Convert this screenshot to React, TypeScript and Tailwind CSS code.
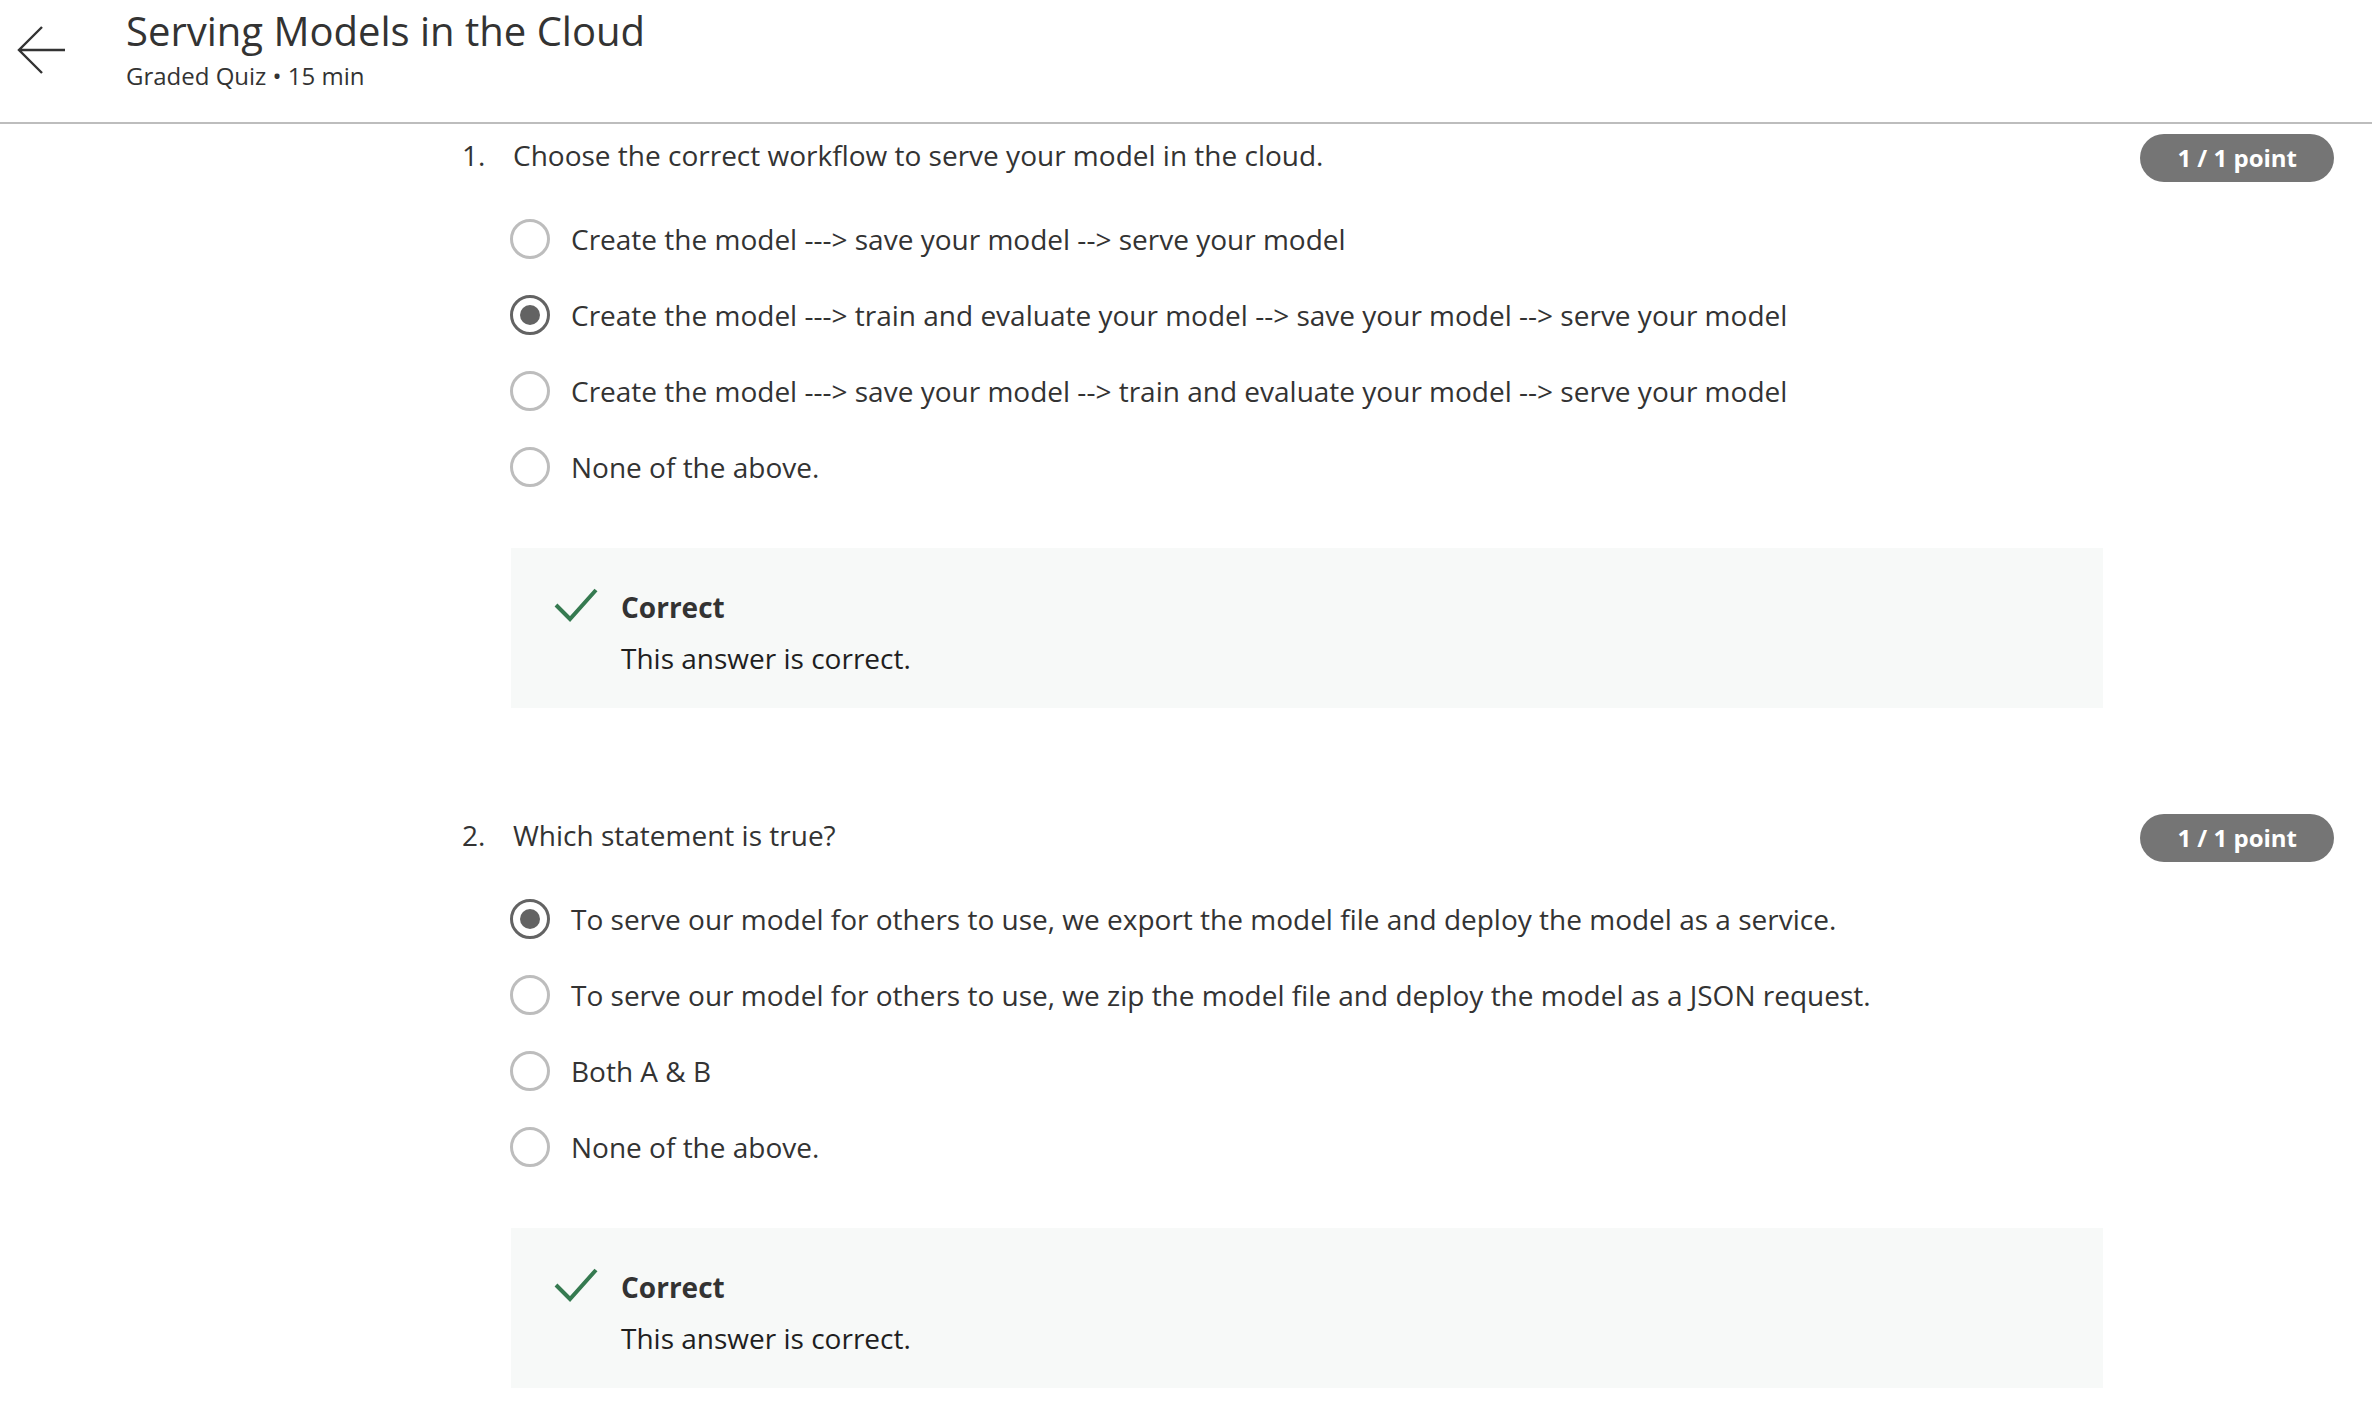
import React from "react";

type Q = {
  num: string;
  text: string;
  options: string[];
  selected: number;
};

const questions: Q[] = [
  {
    num: "1.",
    text: "Choose the correct workflow to serve your model in the cloud.",
    options: [
      "Create the model ---> save your model --> serve your model",
      "Create the model ---> train and evaluate your model --> save your model --> serve your model",
      "Create the model ---> save your model --> train and evaluate your model --> serve your model",
      "None of the above.",
    ],
    selected: 1,
  },
  {
    num: "2.",
    text: "Which statement is true?",
    options: [
      "To serve our model for others to use, we export the model file and deploy the model as a service.",
      "To serve our model for others to use, we zip the model file and deploy the model as a JSON request.",
      "Both A & B",
      "None of the above.",
    ],
    selected: 0,
  },
];

function Radio({ checked }: { checked: boolean }) {
  return checked ? (
    <div className="w-[40px] h-[40px] shrink-0 rounded-full border-[3px] border-[#636363] flex items-center justify-center">
      <div className="w-[20px] h-[20px] rounded-full bg-[#636363]" />
    </div>
  ) : (
    <div className="w-[40px] h-[40px] shrink-0 rounded-full border-[3px] border-[#bdbdbd]" />
  );
}

function Question({ q, first }: { q: Q; first: boolean }) {
  return (
    <section className={first ? "" : "mt-[106px]"}>
      <div className="flex items-start h-[47px]">
        <div className="w-[51px] shrink-0 text-[28px] leading-[42px] text-[#333333]">{q.num}</div>
        <div className="flex-1 text-[28px] leading-[42px] text-[#333333]">{q.text}</div>
        <div className="h-[48px] px-[37px] rounded-full bg-[#757575] text-white font-bold text-[24px] flex items-center whitespace-nowrap">
          1 / 1 point
        </div>
      </div>
      <div className="ml-[50px] mt-[20px] flex flex-col">
        {q.options.map((o, i) => (
          <div key={i} className="h-[76px] flex items-center gap-[21px]">
            <div className="-ml-[2px]">
              <Radio checked={i === q.selected} />
            </div>
            <div className="text-[28px] leading-[42px] text-[#333333]">{o}</div>
          </div>
        ))}
      </div>
      <div className="ml-[49px] mt-[43px] w-[1592px] bg-[#f7f9f8] pl-[43px] pt-[38px] pb-[29px] flex">
        <svg width="44" height="34" viewBox="0 0 44 34" className="mt-[2px] shrink-0">
          <polyline
            points="2,17 16,31 42,2"
            fill="none"
            stroke="#357a50"
            strokeWidth="4"
            strokeLinecap="butt"
            strokeLinejoin="miter"
          />
        </svg>
        <div className="ml-[23px]">
          <div className="text-[28px] leading-[42px] font-bold text-[#333333]">Correct</div>
          <div className="mt-[9px] text-[28px] leading-[42px] text-[#1f1f1f]">This answer is correct.</div>
        </div>
      </div>
    </section>
  );
}

export default function App() {
  return (
    <div className="w-[2372px] h-[1414px] bg-white overflow-hidden font-['Open_Sans',sans-serif]">
      <header className="h-[124px] border-b-2 border-[#bdbdbd] flex">
        <div className="w-[126px] shrink-0">
          <svg width="52" height="52" viewBox="0 0 52 52" className="ml-[16px] mt-[24px]">
            <path d="M49 26 H3 M26 3 L3 26 L26 49" fill="none" stroke="#333333" strokeWidth="2.4" />
          </svg>
        </div>
        <div className="pt-[7px]">
          <div className="text-[40px] leading-[48px] text-[#333333]">Serving Models in the Cloud</div>
          <div className="mt-[5px] text-[24px] leading-[32px] text-[#333333]">Graded Quiz • 15 min</div>
        </div>
      </header>
      <main className="pl-[462px] pr-[38px] pt-[10px]">
        {questions.map((q, i) => (
          <Question key={i} q={q} first={i === 0} />
        ))}
      </main>
    </div>
  );
}
